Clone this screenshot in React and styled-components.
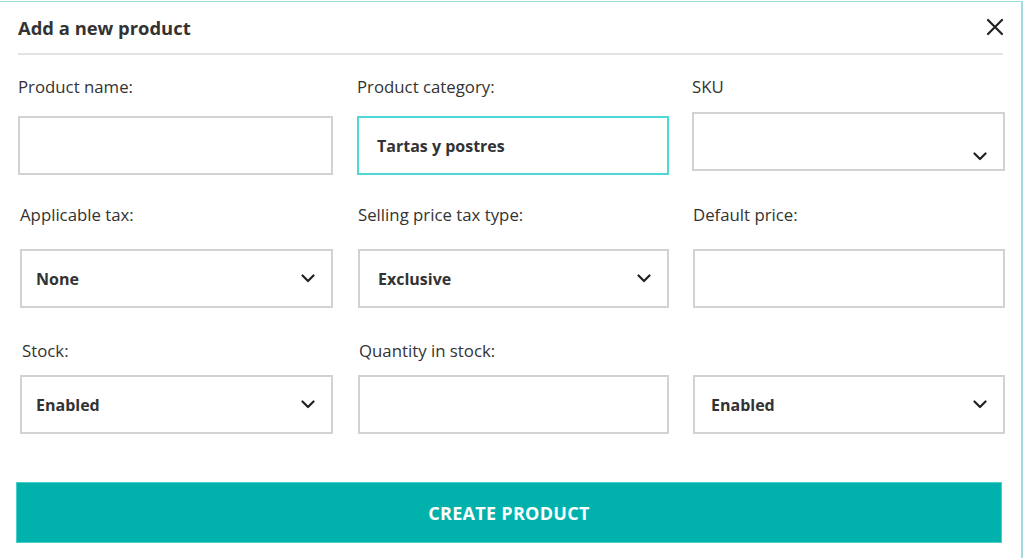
import React from "react";
import styled, { createGlobalStyle } from "styled-components";

const GlobalStyle = createGlobalStyle`
  html, body {
    margin: 0;
    padding: 0;
    background: #fff;
    font-family: "Open Sans", "Liberation Sans", sans-serif;
  }
`;

const Panel = styled.div`
  box-sizing: border-box;
  width: 1023px;
  height: 558px;
  margin-top: 1px;
  border-top: 1px solid #9fdede;
  border-right: 2px solid #9fdede;
  padding: 0 17px 0 18px;
  background: #fff;
`;

const Header = styled.div`
  display: flex;
  align-items: center;
  justify-content: space-between;
  height: 51px;
  border-bottom: 2px solid #e3e3e3;
  margin-right: 1px;
`;

const Title = styled.h1`
  margin: 0;
  font-size: 18.4px;
  font-weight: 700;
  color: #333;
`;

const CloseButton = styled.button`
  border: 0;
  background: none;
  padding: 0;
  margin-right: -1px;
  margin-bottom: 1px;
  display: flex;
  cursor: pointer;
`;

const Grid = styled.div`
  display: grid;
  grid-template-columns: 315px 313px 313px;
  column-gap: 23px;
  margin-top: ${(p) => p.top}px;
`;

const Field = styled.div`
  display: flex;
  flex-direction: column;
  padding-left: ${(p) => p.shift || 0}px;
`;

const Label = styled.label`
  font-size: 16.8px;
  font-weight: 400;
  color: #333;
  line-height: 20px;
  height: 20px;
  margin-bottom: ${(p) => p.gap}px;
  padding-left: ${(p) => p.indent || 0}px;
`;

const Box = styled.div`
  box-sizing: border-box;
  height: 59px;
  margin-top: ${(p) => (p.lift ? -p.lift : 0)}px;
  border: 2px solid ${(p) => (p.active ? "#4fd6d6" : "#d2d2d2")};
  display: flex;
  align-items: ${(p) => (p.low ? "flex-end" : "center")};
  justify-content: space-between;
  padding: 0 16px 0 ${(p) => p.pad || 16}px;
  padding-bottom: ${(p) => (p.low ? 8 : 0)}px;
  font-size: 16px;
  font-weight: 700;
  color: #333;
`;

const Button = styled.button`
  display: block;
  width: 986px;
  height: 61px;
  margin: 48px 0 0 -2px;
  border: 1px solid #48cfca;
  background: #00b2ab;
  color: #fff;
  font-family: "Open Sans", "Liberation Sans", sans-serif;
  font-size: 18px;
  font-weight: 700;
  letter-spacing: 0.3px;
  cursor: pointer;
`;

const Chevron = () => (
  <svg width="14" height="9" viewBox="0 0 14 9" fill="none">
    <path d="M1.5 1.5 L7 7 L12.5 1.5" stroke="#222" strokeWidth="2.2" strokeLinecap="round" strokeLinejoin="round" />
  </svg>
);

const CloseIcon = () => (
  <svg width="18" height="18" viewBox="0 0 18 18" fill="none">
    <path d="M2 2 L16 16 M16 2 L2 16" stroke="#222" strokeWidth="2.2" strokeLinecap="round" />
  </svg>
);

export default function App() {
  return (
    <>
      <GlobalStyle />
      <Panel>
        <Header>
          <Title>Add a new product</Title>
          <CloseButton aria-label="Close">
            <CloseIcon />
          </CloseButton>
        </Header>

        <Grid top={22}>
          <Field>
            <Label gap={19}>Product name:</Label>
            <Box />
          </Field>
          <Field shift={1}>
            <Label gap={19}>Product category:</Label>
            <Box active pad={18}>Tartas y postres</Box>
          </Field>
          <Field>
            <Label gap={19}>SKU</Label>
            <Box low lift={4}>
              <span />
              <Chevron />
            </Box>
          </Field>
        </Grid>

        <Grid top={30}>
          <Field shift={2}>
            <Label gap={24} indent={-2}>Applicable tax:</Label>
            <Box pad={14}>
              None
              <Chevron />
            </Box>
          </Field>
          <Field shift={2}>
            <Label gap={24} indent={-2}>Selling price tax type:</Label>
            <Box pad={18}>
              Exclusive
              <Chevron />
            </Box>
          </Field>
          <Field shift={1}>
            <Label gap={24}>Default price:</Label>
            <Box />
          </Field>
        </Grid>

        <Grid top={33}>
          <Field shift={2}>
            <Label gap={14} indent={2}>Stock:</Label>
            <Box pad={14}>
              Enabled
              <Chevron />
            </Box>
          </Field>
          <Field shift={2}>
            <Label gap={14} indent={1}>Quantity in stock:</Label>
            <Box />
          </Field>
          <Field shift={1}>
            <Label gap={14} />
            <Box pad={16}>
              Enabled
              <Chevron />
            </Box>
          </Field>
        </Grid>

        <Button>CREATE PRODUCT</Button>
      </Panel>
    </>
  );
}
